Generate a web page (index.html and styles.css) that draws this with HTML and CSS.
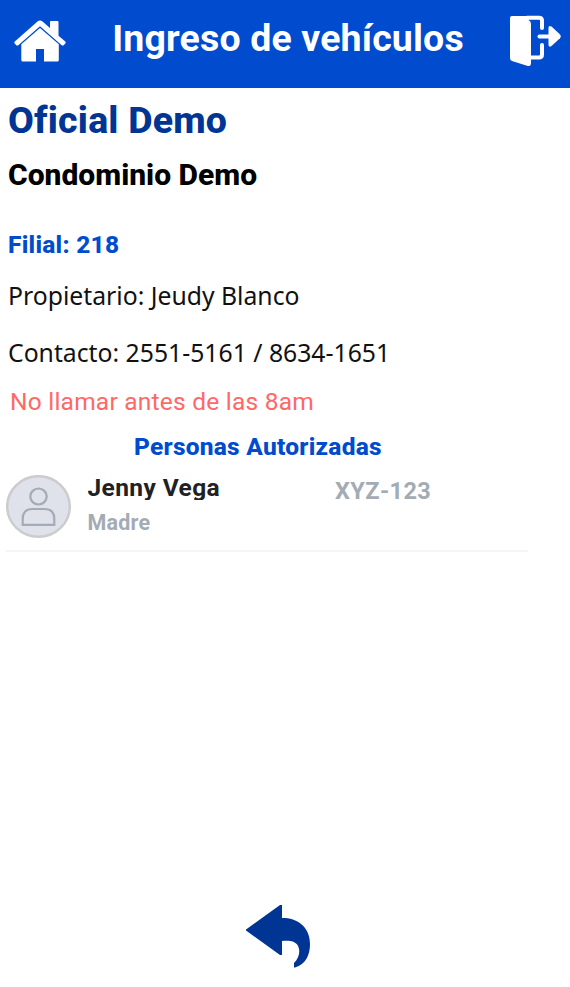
FILE: index.html
```
<!DOCTYPE html>
<html lang="es">
<head>
    <meta charset="UTF-8">
    <meta name="viewport" content="width=device-width, initial-scale=1.0">
    <title>Ingreso de vehículos</title>
    <link rel="stylesheet" href="styles.css">
</head>
<body>
    <header class="toolbar">
        <a class="home" href="#" aria-label="Inicio">
            <svg width="52" height="42" viewBox="0 0 52 42">
                <path d="M.8 21.6 L23.5 1.6 Q26 -.4 28.5 1.6 L36 8 V2 Q36 1 37 1 H43.5 Q44.5 1 44.5 2 V15.7 L51.3 21.6 Q52.1 22.6 51.3 23.6 L49.7 25.2 Q48.7 25.9 47.7 25.2 L26 6.2 L4.3 25.2 Q3.3 25.9 2.3 25.2 L.7 23.6 Q-.1 22.6 .8 21.6 Z"/>
                <path d="M26 8 L44.8 24.2 V40 Q44.8 41.5 43.3 41.5 H30 V29 H22 V41.5 H8.8 Q7.3 41.5 7.3 40 V24.2 Z"/>
            </svg>
        </a>
        <h1 class="title">Ingreso de vehículos</h1>
        <a class="logout" href="#" aria-label="Salir">
            <svg width="52" height="52" viewBox="0 0 52 52">
                <path d="M2 1 H19 V5 L18.5 5 Q21 6 21 9 V48 Q21 52 17 50.8 L2 46 Q0 45.3 0 43 V3 Q0 1 2 1 Z"/>
                <path class="frame" d="M17 2.7 H29 Q32 2.7 32 5.7 V13 M32 30 V39.5 Q32 42.5 29 42.5 H20"/>
                <path class="frame" d="M29.5 21.4 H40"/>
                <path d="M38.5 13 Q38.5 9.8 41.5 11.6 L50 19.4 Q51.8 21.4 50 23.2 L41.5 31 Q38.5 32.8 38.5 29.5 Z"/>
            </svg>
        </a>
    </header>

    <main class="content">
        <h2 class="officer">Oficial Demo</h2>
        <h3 class="condo">Condominio Demo</h3>
        <div class="unit">Filial: 218</div>
        <div class="detail">Propietario: Jeudy Blanco</div>
        <div class="detail contact">Contacto: 2551-5161 / 8634-1651</div>
        <div class="notice">No llamar antes de las 8am</div>

        <section class="authorized">
            <h4 class="authorized-title">Personas Autorizadas</h4>
            <div class="person">
                <svg class="avatar" width="66" height="64" viewBox="0 0 66 64">
                    <ellipse class="avatar-bg" cx="32.5" cy="31.5" rx="31.3" ry="30.3"/>
                    <ellipse cx="32.5" cy="21.5" rx="8.2" ry="8"/>
                    <path d="M16.7 49.8 V44 Q16.7 34 26.5 34 H38.5 Q48.3 34 48.3 44 V49.8 Z"/>
                </svg>
                <div class="person-info">
                    <div class="person-name">Jenny Vega</div>
                    <div class="person-relation">Madre</div>
                </div>
                <div class="plate">XYZ-123</div>
            </div>
        </section>
    </main>

    <footer class="footer">
        <a class="back" href="#" aria-label="Volver">
            <svg width="65" height="64" viewBox="0 0 65 64">
                <path d="M34 0 H36 V13 H39 C54 14 64 24 64 39 C64 50 60 59 49 62.5 H48 V58 C53 53 55 46 51.5 40 C48 35.5 43 35.5 36 36 V50 H34 L0 25.5 V24.5 Z"/>
            </svg>
        </a>
    </footer>
</body>
</html>
```
FILE: styles.css
```
:root {
    --blue: #004bce;
    --blue-dark: #003594;
    --gray: #a3abb4;
}

* {
    box-sizing: border-box;
}

body {
    margin: 0;
    height: 987px;
    display: flex;
    flex-direction: column;
    background: #fff;
    color: #111;
    font-family: Roboto, "Liberation Sans", sans-serif;
    font-variant-ligatures: none;
    overflow: hidden;
    white-space: nowrap;
}

h1, h2, h3, h4 {
    margin: 0;
}

svg {
    display: block;
}

/* Toolbar */
.toolbar {
    display: flex;
    justify-content: space-between;
    height: 88px;
    padding: 15px 8px 0 14px;
    background: var(--blue);
    color: #fff;
    fill: #fff;
}

.home {
    padding-top: 5px;
}

.title {
    font-size: 37.5px;
    font-weight: 700;
    letter-spacing: 0.15px;
    line-height: 46px;
}

.frame {
    fill: none;
    stroke: #fff;
    stroke-width: 4;
    stroke-linecap: round;
}

/* Details */
.content {
    flex: 1;
    padding: 0 8px;
}

.officer {
    padding-top: 8px;
    color: var(--blue-dark);
    font-size: 37.5px;
    font-weight: 800;
    letter-spacing: 0.2px;
    line-height: 49px;
}

.condo {
    margin-top: 9px;
    color: #000;
    font-size: 30px;
    font-weight: 800;
    line-height: 42px;
}

.unit {
    margin-top: 32px;
    color: var(--blue);
    font-size: 24.5px;
    font-weight: 800;
    letter-spacing: 0.25px;
    line-height: 33px;
}

.detail {
    margin-top: 18px;
    font-family: "Noto Sans", sans-serif;
    font-size: 24.75px;
    line-height: 34px;
}

.contact {
    margin-top: 23px;
}

.notice {
    margin: 16px 0 0 2px;
    color: #ff6868;
    font-size: 24.5px;
    letter-spacing: 0.23px;
    line-height: 32px;
}

/* Authorized people */
.authorized {
    width: 522px;
    margin: 13px 0 0 -2px;
}

.authorized-title {
    padding-left: 128px;
    color: var(--blue);
    font-size: 24.5px;
    font-weight: 800;
    letter-spacing: 0.25px;
    line-height: 32px;
}

.person {
    display: flex;
    height: 89px;
    padding-top: 12px;
    border-bottom: 2px solid #f5f5f5;
}

.avatar {
    flex: none;
    fill: none;
    stroke: #a3abb7;
    stroke-width: 2.2;
}

.avatar-bg {
    fill: #dfe2eb;
    stroke: #ccc;
    stroke-width: 2.5;
}

.person-info {
    width: 263px;
    padding-left: 15.5px;
}

.person-name {
    height: 25px;
    overflow: hidden;
    color: #202124;
    font-size: 24.5px;
    font-weight: 700;
    letter-spacing: 0.4px;
    line-height: 25px;
}

.person-relation {
    margin-top: 9px;
    color: var(--gray);
    font-size: 21.5px;
    font-weight: 700;
    letter-spacing: 0.2px;
    line-height: 28px;
}

.plate {
    color: var(--gray);
    font-size: 23.5px;
    font-weight: 700;
    letter-spacing: 0.4px;
    line-height: 32px;
}

/* Back button */
.footer {
    display: flex;
    height: 82px;
    padding-left: 246px;
    fill: var(--blue-dark);
}
```
